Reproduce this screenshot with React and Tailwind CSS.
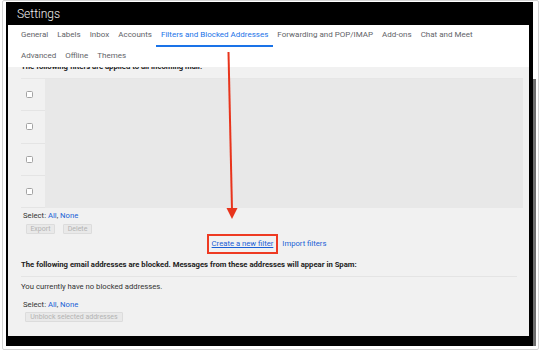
import React from "react";

const Checkbox = () => (
  <div className="w-[7px] h-[7px] rounded-[1.5px] border border-[#a3a3a3] bg-white" />
);

const Tab = ({ children, active }) => (
  <div
    className={
      "px-[4.5px] h-full flex items-center border-b-2 " +
      (active ? "border-[#1a73e8] text-[#1a73e8]" : "border-transparent text-[#5f6368]")
    }
  >
    {children}
  </div>
);

export default function App() {
  return (
    <div className="w-[541px] h-[353px] bg-white relative overflow-hidden font-['Roboto',sans-serif]">
      <div className="ml-[2px] w-[537px] h-[350px] border border-[#d4d4d4] rounded-[2px] flex pl-[3px] pt-[1px]">
        <div className="w-[527px] h-[344px] bg-black flex flex-col pl-[2px] pr-[4px] pb-[10px]">
          <div className="h-[23px] flex items-center pl-[9px] text-[#f2f2f2] text-[12px] font-light leading-none">
            Settings
          </div>
          <div className="flex-1 flex flex-col bg-[#f1f1f1] overflow-hidden">
            <div className="bg-white h-[42px] flex flex-col pl-[8.5px] text-[8px] leading-none">
              <div className="h-[22px] flex">
                <Tab>General</Tab>
                <Tab>Labels</Tab>
                <Tab>Inbox</Tab>
                <Tab>Accounts</Tab>
                <Tab active>Filters and Blocked Addresses</Tab>
                <Tab>Forwarding and POP/IMAP</Tab>
                <Tab>Add-ons</Tab>
                <Tab>Chat and Meet</Tab>
              </div>
              <div className="h-[20px] flex">
                <Tab>Advanced</Tab>
                <Tab>Offline</Tab>
                <Tab>Themes</Tab>
              </div>
            </div>
            <div className="h-[11px] overflow-hidden pl-[13px]">
              <div className="-mt-[4px] text-[7.7px] leading-[8px] font-bold text-[#222]">
                The following filters are applied to all incoming mail:
              </div>
            </div>
            <div className="ml-[13px] mr-[6px] h-[130px] flex border-t border-[#e6e6e6]">
              <div className="w-[24px] flex flex-col">
                {[0, 1, 2, 3].map((i) => (
                  <div
                    key={i}
                    className="flex-1 flex items-center pl-[5px] border-b border-[#e4e4e4]"
                  >
                    <Checkbox />
                  </div>
                ))}
              </div>
              <div className="flex-1 bg-[#e8e8e8]" />
            </div>
            <div className="pl-[15px] mt-[3px] h-[10px] flex items-center text-[7.7px] text-[#333]">
              Select:&nbsp;<span className="text-[#1a5fd6]">All</span>,&nbsp;
              <span className="text-[#1a5fd6]">None</span>
            </div>
            <div className="pl-[18px] mt-[3px] h-[10px] flex gap-[8px] text-[7px] text-[#b3b3b3]">
              <div className="w-[29px] h-full flex items-center justify-center bg-[#e9e9e9] border border-[#dcdcdc] rounded-[1px]">
                Export
              </div>
              <div className="w-[29px] h-full flex items-center justify-center bg-[#e9e9e9] border border-[#dcdcdc] rounded-[1px]">
                Delete
              </div>
            </div>
            <div className="h-[20px] flex items-center justify-center gap-[4px] text-[7.7px] text-[#1a5fd6] pr-[4px]">
              <div className="h-[20px] border-2 border-[#ee3a22] px-[3px] flex items-center">
                <span className="underline">Create a new filter</span>
              </div>
              <span>Import filters</span>
            </div>
            <div className="pl-[13px] mt-[6px] h-[10px] flex items-center text-[7.7px] font-bold text-[#222] whitespace-nowrap">
              The following email addresses are blocked. Messages from these addresses will appear in Spam:
            </div>
            <div className="ml-[13px] mr-[12px] mt-[6px] border-t border-[#e4e4e4]" />
            <div className="pl-[13px] mt-[5px] h-[10px] flex items-center text-[7.7px] text-[#333]">
              You currently have no blocked addresses.
            </div>
            <div className="pl-[15px] mt-[8px] h-[10px] flex items-center text-[7.7px] text-[#333]">
              Select:&nbsp;<span className="text-[#1a5fd6]">All</span>,&nbsp;
              <span className="text-[#1a5fd6]">None</span>
            </div>
            <div className="pl-[17px] mt-[2px] h-[10px] flex text-[7px] text-[#b3b3b3]">
              <div className="w-[98px] h-full flex items-center justify-center bg-[#e9e9e9] border border-[#dcdcdc] rounded-[1px]">
                Unblock selected addresses
              </div>
            </div>
          </div>
        </div>
        <div className="w-[3px] h-[267px] mt-[77px] bg-[#6e6e6e]" />
      </div>
      <svg className="absolute left-0 top-0 pointer-events-none" width="541" height="353">
        <line x1="228.5" y1="52" x2="232" y2="210" stroke="#e8341c" strokeWidth="2" />
        <polygon points="226.5,208 237.5,208 232,219" fill="#e8341c" />
      </svg>
    </div>
  );
}
